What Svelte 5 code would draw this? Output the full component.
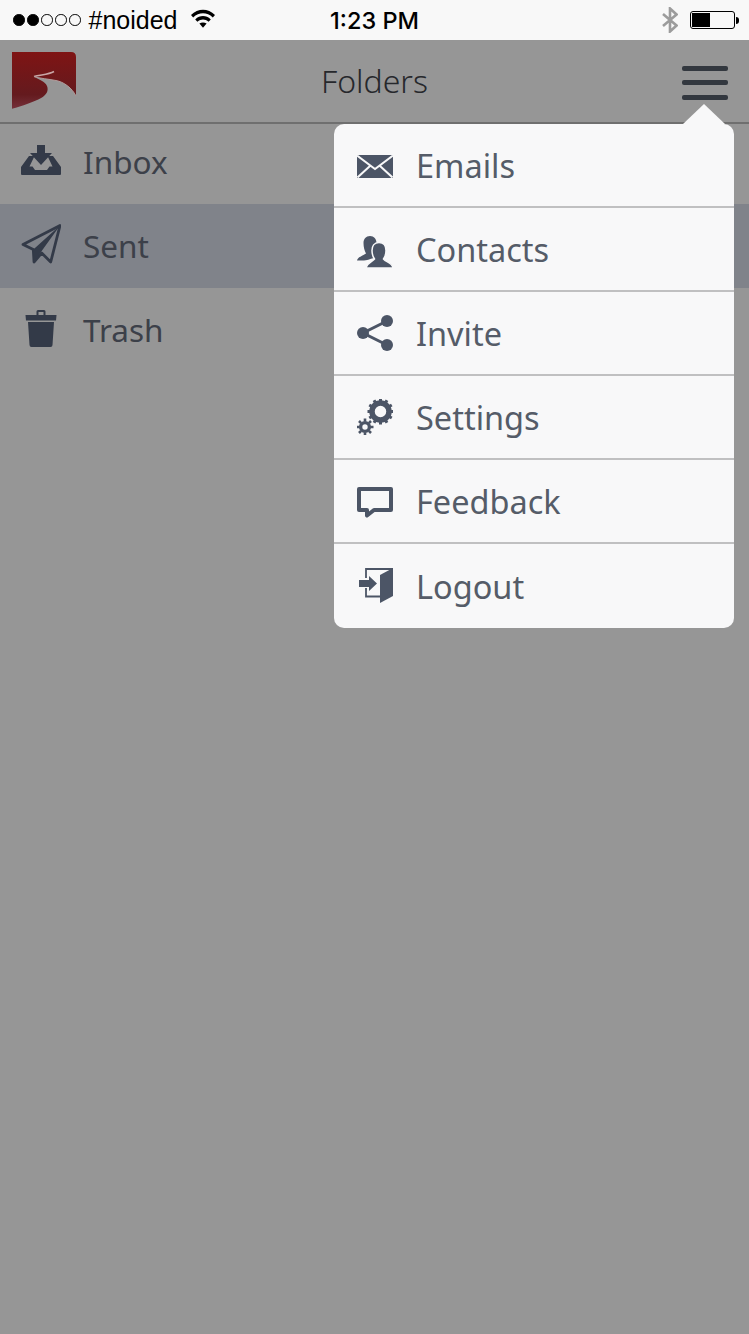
<script>
  const folders = [
    { id: "inbox", label: "Inbox" },
    { id: "sent", label: "Sent", active: true },
    { id: "trash", label: "Trash" }
  ];
  const menu = ["Emails", "Contacts", "Invite", "Settings", "Feedback", "Logout"];

  // gear teeth, drawn as short spokes round a ring
  function teeth(cx, cy, r, n) {
    let d = "";
    for (let i = 0; i < n; i++) {
      const a = (i / n) * Math.PI * 2;
      const c = Math.cos(a);
      const s = Math.sin(a);
      d += `M${(cx + c * (r - 3)).toFixed(2)} ${(cy + s * (r - 3)).toFixed(2)}L${(cx + c * r).toFixed(2)} ${(cy + s * r).toFixed(2)}`;
    }
    return d;
  }
</script>

<div class="screen">
  <div class="status">
    <div class="left">
      <span class="dots">
        <i class="on"></i><i class="on"></i><i></i><i></i><i></i>
      </span>
      <span class="carrier">#noided</span>
      <svg class="wifi" width="24" height="19" viewBox="0 0 24 19">
        <path d="M0 6C7 -1 17 -1 24 6L21.800 8.400C16 3 8 3 2.200 8.400Z" fill="#000" />
        <path d="M4.200 10.400C9 6 15 6 19.800 10.400L17.600 12.800C14 9.800 10 9.800 6.400 12.800Z" fill="#000" />
        <path d="M8.400 14.600C10.500 13 13.500 13 15.600 14.600L12 18.800Z" fill="#000" />
      </svg>
    </div>
    <span class="time">1:23 PM</span>
    <div class="right">
      <svg class="bt" width="16" height="26" viewBox="0 0 16 26">
        <path d="M1 7L14.500 18.500L8 24.500V1.500L14.500 7.500L1 19" fill="none" stroke="#9c9c9c" stroke-width="2.600" />
      </svg>
      <span class="battery"><span class="level"></span></span>
      <span class="nub"></span>
    </div>
  </div>

  <header class="bar">
    <svg class="logo" width="64" height="57" viewBox="0 0 64 57">
      <defs>
        <linearGradient id="red" x1="0" y1="0" x2="0" y2="1">
          <stop offset="0" stop-color="#7f1414" />
          <stop offset="0.75" stop-color="#641a1e" />
          <stop offset="1" stop-color="#74303a" />
        </linearGradient>
      </defs>
      <path d="M0 0H59Q64 0 64 5V44C60 36 52 30 44 28.500C36 27 28 26.500 22 24.500C27 28 33 29 35 34C37 39 34 43 30 45.500C22 50 10 54 0 56.700Z" fill="url(#red)" />
      <path d="M22 24.500C28 22.500 36 23 42 19.500" fill="none" stroke="#c9a6a6" stroke-width="1.500" />
      <path d="M22 24.500C28 26.500 36 27 44 28.500C52 30 60 36 64 44" fill="none" stroke="#b29c9c" stroke-width="1" />
    </svg>
    <h1>Folders</h1>
    <div class="burger"><span></span><span></span><span></span></div>
  </header>

  <ul class="folders">
    {#each folders as f}
      <li class:active={f.active}>
        <span class="ico">
          {#if f.id === "inbox"}
            <svg width="40" height="30" viewBox="0 0 40 30">
              <path d="M16 0H24V8H31L20 20L9 8H16Z" fill="#333a48" />
              <path d="M8 11H13.500L8.500 21.500H11.500L14 25H26L28.500 21.500H31.500L26.500 11H32L40 22V29Q40 30 39 30H1Q0 30 0 29V22Z" fill="#333a48" />
            </svg>
          {:else if f.id === "sent"}
            <svg width="40" height="40" viewBox="0 0 40 40">
              <path d="M39 1.500L2 20.500L12.300 25.500L13 38L20.700 29L29.700 38Z" fill="none" stroke="#333a48" stroke-width="2.800" stroke-linejoin="round" />
              <path d="M39 1.500L12.300 25.500L13 38L20.700 27Z" fill="#333a48" />
            </svg>
          {:else}
            <svg width="32" height="37" viewBox="0 0 32 37">
              <path d="M12.500 6V1.500Q12.500 1 13 1H19Q19.500 1 19.500 1.500V6" fill="none" stroke="#333a48" stroke-width="2" />
              <path d="M0.500 5H31.500L31 10.500H1Z" fill="#333a48" />
              <path d="M3 12H29L27.500 35Q27.500 37 25.500 37H6.500Q4.500 37 4.500 35Z" fill="#333a48" />
            </svg>
          {/if}
        </span>
        <span class="label">{f.label}</span>
      </li>
    {/each}
  </ul>

  <div class="popup">
    <span class="arrow"></span>
    {#each menu as item}
      <div class="row">
        <span class="mico">
          {#if item === "Emails"}
            <svg class="emails" width="36" height="23" viewBox="0 0 36 23">
              <rect width="36" height="23" fill="#4c5566" />
              <path d="M0 0.500L18 14L36 0.500M0.500 22.500L13 11M35.500 22.500L23 11" fill="none" stroke="#f8f8f9" stroke-width="2" />
            </svg>
          {:else if item === "Contacts"}
            <svg class="contacts" width="36" height="32" viewBox="0 0 36 32">
              <path d="M13 0C17 0 19.500 3 19.500 7C19.500 10 18.500 13 17 15L17 22C13 23 9 24.500 7 24.500H0C1 20.500 6 20 9 17.500C7.500 15 6.500 11 6.500 7C6.500 3 9 0 13 0Z" fill="#4c5566" />
              <path d="M22 6.500C27 6.500 29 10.500 29 14.500C29 18 28 21 26.500 23C29 26 35 27 36 31.500V32H9V31.500C10 27 15 26 17.500 23C16 21 15 18 15 14.500C15 10.500 17 6.500 22 6.500Z" fill="#4c5566" stroke="#f8f8f9" stroke-width="1.500" />
            </svg>
          {:else if item === "Invite"}
            <svg width="36" height="36" viewBox="0 0 36 36">
              <path d="M30 6L6 18L30 30" fill="none" stroke="#4c5566" stroke-width="3" />
              <circle cx="30" cy="6" r="6" fill="#4c5566" />
              <circle cx="6" cy="18" r="6" fill="#4c5566" />
              <circle cx="30" cy="30" r="6" fill="#4c5566" />
            </svg>
          {:else if item === "Settings"}
            <svg width="36" height="36" viewBox="0 0 36 36">
              <circle cx="23.500" cy="12.500" r="8.500" fill="none" stroke="#4c5566" stroke-width="5.500" />
              <path d={teeth(23.5, 12.5, 13, 12)} stroke="#4c5566" stroke-width="3" />
              <circle cx="8" cy="28" r="4.400" fill="none" stroke="#4c5566" stroke-width="3.400" />
              <path d={teeth(8, 28, 8.5, 8)} stroke="#4c5566" stroke-width="2.600" />
            </svg>
          {:else if item === "Feedback"}
            <svg class="feedback" width="36" height="32" viewBox="0 0 36 32">
              <path d="M2 2H34V23H17L10 28.500V23H2Z" fill="none" stroke="#4c5566" stroke-width="4" stroke-linejoin="round" />
            </svg>
          {:else}
            <svg width="36" height="36" viewBox="0 0 36 36">
              <path d="M9 10V1H36M9 20V28.500H23" fill="none" stroke="#4c5566" stroke-width="1.800" />
              <path d="M23 7L36 0V28L23 35Z" fill="#4c5566" />
              <path d="M2 12H12V8L20 15.500L12 23V19H2Z" fill="#4c5566" />
            </svg>
          {/if}
        </span>
        <span class="mlabel">{item}</span>
      </div>
    {/each}
  </div>
</div>

<style>
  :global(body) {
    margin: 0;
    background: #969696;
  }

  .screen {
    position: relative;
    width: 749px;
    height: 1334px;
    background: #969696;
    overflow: hidden;
    font-family: "Noto Sans", sans-serif;
  }

  .status {
    position: relative;
    height: 40px;
    background: #f8f8f8;
    display: flex;
    align-items: center;
    justify-content: space-between;
    padding: 0 10px 0 13px;
    box-sizing: border-box;
    font-family: "Liberation Sans", sans-serif;
    color: #000;
  }

  .left,
  .right {
    display: flex;
    align-items: center;
  }

  .dots {
    display: flex;
    gap: 2.500px;
  }

  .dots i {
    width: 9.500px;
    height: 9.500px;
    border: 1px solid #000;
    border-radius: 50%;
  }

  .dots i.on {
    background: #000;
  }

  .carrier {
    font-size: 25px;
    margin-left: 8px;
  }

  .wifi {
    margin-left: 14px;
    margin-top: -3px;
  }

  .time {
    position: absolute;
    left: 0;
    right: 0;
    text-align: center;
    font-family: "Inter", sans-serif;
    font-size: 23.500px;
    font-weight: 500;
  }

  .bt {
    margin-right: 12px;
  }

  .battery {
    width: 45px;
    height: 18px;
    border: 1px solid #000;
    border-radius: 3px;
    padding: 1px;
    box-sizing: border-box;
    display: block;
  }

  .level {
    display: block;
    width: 18px;
    height: 100%;
    background: #000;
  }

  .nub {
    width: 3px;
    height: 7px;
    background: #000;
    border-radius: 0 3px 3px 0;
    margin-left: 1px;
  }

  .bar {
    height: 84px;
    box-sizing: border-box;
    border-bottom: 2px solid #6f6f6f;
    display: flex;
    align-items: center;
    justify-content: space-between;
    padding: 0 21px 0 12px;
    position: relative;
  }

  .logo {
    margin-top: -1px;
  }

  h1 {
    position: absolute;
    left: 0;
    right: 0;
    margin: -2px 0 0;
    text-align: center;
    font-size: 32px;
    font-weight: 300;
    color: #26282c;
  }

  .burger {
    display: flex;
    flex-direction: column;
    gap: 9.500px;
    margin-top: 3px;
  }

  .burger span {
    display: block;
    width: 46px;
    height: 5px;
    border-radius: 2px;
    background: #33383f;
  }

  .folders {
    list-style: none;
    margin: -4px 0 0;
    padding: 0;
  }

  .folders li {
    height: 84px;
    display: flex;
    align-items: center;
    color: #3c4049;
  }

  .folders li.active {
    background: #80838a;
  }

  .ico {
    width: 82px;
    display: flex;
    justify-content: center;
    flex: none;
    margin-bottom: 4px;
  }

  .label {
    font-size: 31.500px;
    margin-left: 1px;
    margin-bottom: 2px;
  }

  .popup {
    position: absolute;
    left: 334px;
    top: 124px;
    width: 400px;
    background: #f8f8f9;
    border-radius: 10px;
  }

  .arrow {
    position: absolute;
    top: -20px;
    left: 349px;
    width: 0;
    height: 0;
    border-left: 21px solid transparent;
    border-right: 21px solid transparent;
    border-bottom: 20px solid #f8f8f9;
  }

  .row {
    height: 84px;
    box-sizing: border-box;
    display: flex;
    align-items: center;
    border-bottom: 2px solid #c0c0c1;
    color: #555c68;
  }

  .row:last-child {
    border-bottom: 0;
  }

  .mico {
    width: 83px;
    flex: none;
    display: flex;
    align-items: center;
    padding-left: 23px;
    box-sizing: border-box;
  }

  .mlabel {
    font-size: 32.500px;
    margin-left: -1px;
  }

  .emails {
    margin-top: 2px;
  }

  .contacts {
    margin-top: 5px;
  }

  .feedback {
    margin-top: 3px;
  }
</style>
